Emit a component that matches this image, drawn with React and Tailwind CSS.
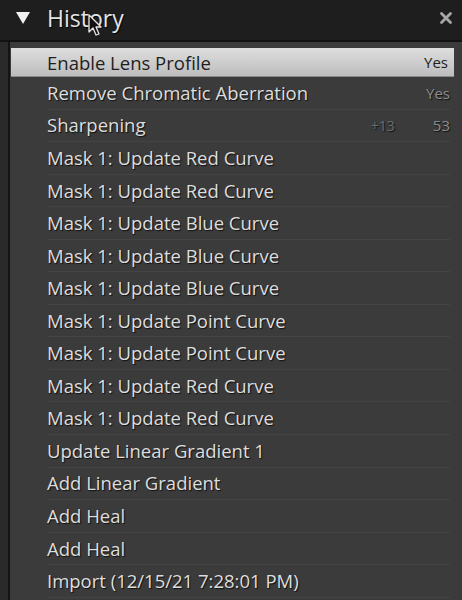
import React from "react";

const rows = [
  { label: "Enable Lens Profile", value: "Yes", selected: true },
  { label: "Remove Chromatic Aberration", value: "Yes" },
  { label: "Sharpening", delta: "+13", value: "53" },
  { label: "Mask 1: Update Red Curve" },
  { label: "Mask 1: Update Red Curve" },
  { label: "Mask 1: Update Blue Curve" },
  { label: "Mask 1: Update Blue Curve" },
  { label: "Mask 1: Update Blue Curve" },
  { label: "Mask 1: Update Point Curve" },
  { label: "Mask 1: Update Point Curve" },
  { label: "Mask 1: Update Red Curve" },
  { label: "Mask 1: Update Red Curve" },
  { label: "Update Linear Gradient 1" },
  { label: "Add Linear Gradient" },
  { label: "Add Heal" },
  { label: "Add Heal" },
  { label: "Import (12/15/21 7:28:01 PM)" },
];

const HistoryRow = ({ row }) => {
  if (row.selected) {
    return (
      <div className="h-[33px] pt-[4px] pl-[1px] pr-[8px]">
        <div className="flex h-[29px] items-center pl-[36px] pr-[6px] bg-gradient-to-b from-[#dedede] to-[#bcbcbc] shadow-[inset_0_-1px_0_#8a8a8a]">
          <span className="flex-1 text-[18.5px] font-medium text-[#1e1e1e]">{row.label}</span>
          <span className="text-[15px] font-medium text-[#1e1e1e]">{row.value}</span>
        </div>
      </div>
    );
  }
  return (
    <div className="h-[32.55px] pl-[37px] pr-[12px]">
      <div className="flex h-full items-center border-b border-[#444444] [text-shadow:1px_1px_1px_#111]">
        <span className="flex-1 text-[18.5px] font-medium text-[#dedede]">{row.label}</span>
        {row.delta && (
          <span className="mr-[38px] text-[14px] text-[#6e6e6e]">{row.delta}</span>
        )}
        {row.value && (
          <span className="text-[15px] font-medium text-[#8c8c8c]">{row.value}</span>
        )}
      </div>
    </div>
  );
};

export default function App() {
  return (
    <div className="flex h-[600px] w-[462px] overflow-hidden bg-[#2a2a2a] font-['Open_Sans',sans-serif]">
      <div className="flex flex-1 flex-col">
        {/* Header */}
        <div className="relative flex h-[42px] items-center bg-[#1e1e1e] border-b-2 border-[#121212]">
          <svg width="16" height="14" viewBox="0 0 16 14" className="ml-[15px] -mt-[4px]">
            <path d="M1 1 L15 1 L8 13 Z" fill="#f0f0f0" />
          </svg>
          <span className="ml-[16px] -mt-[4px] text-[23px] text-[#e4e4e4] [text-shadow:1px_1px_1px_#000]">
            History
          </span>
          <div className="flex-1" />
          <svg width="14" height="14" viewBox="0 0 14 14" className="mr-[9px] -mt-[4px]">
            <path d="M2.5 2.5 L11.5 11.5 M11.5 2.5 L2.5 11.5" stroke="#a8a8a8" strokeWidth="2.8" strokeLinecap="round" />
          </svg>
          {/* mouse cursor */}
          <svg
            width="16"
            height="24"
            viewBox="0 0 16 24"
            className="absolute left-[88px] top-[14px]"
          >
            <path
              d="M1 1 L1 18 L5 14 L8 21 L11 20 L8 13 L13 13 Z"
              fill="#111"
              stroke="#e8e8e8"
              strokeWidth="1.3"
              strokeLinejoin="round"
            />
          </svg>
        </div>

        {/* List */}
        <div className="flex flex-1 bg-[#2a2a2a]">
          <div className="w-[8px] bg-[#2a2a2a]" />
          <div className="flex-1 border-l-2 border-[#141414] bg-[#3b3b3b] pt-[2px]">
            {rows.map((row, i) => (
              <HistoryRow key={i} row={row} />
            ))}
          </div>
        </div>
      </div>
    </div>
  );
}
